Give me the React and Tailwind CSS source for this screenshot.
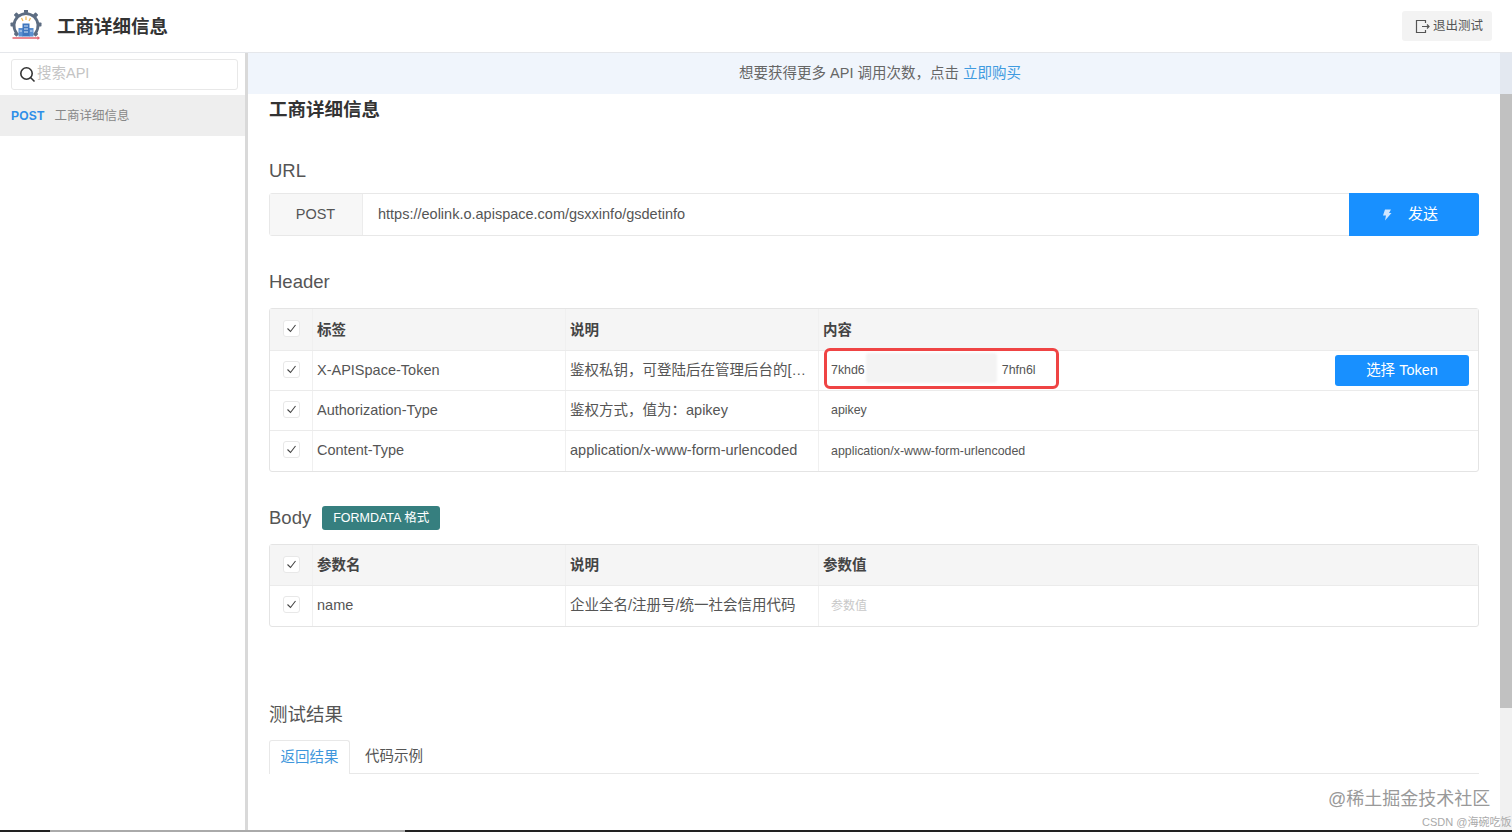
import React from "react";

const FONT = "[font-family:'Liberation_Sans','Noto_Sans_CJK_SC',sans-serif]";

function Logo() {
  const teeth = [-135, -90, -45, 0, 45, 90, 135];
  return (
    <svg width="32" height="32" viewBox="0 0 32 32" className="shrink-0">
      <g transform="translate(16 14.500)">
        <path d="M-9.500 8.500A12 12 0 1 1 9.500 8.500" fill="none" stroke="#5d6d82" strokeWidth="2.800" />
        {teeth.map((a) => (
          <rect key={a} x="-2" y="-15.500" width="4" height="4" rx="0.800" fill="#5d6d82" transform={`rotate(${a})`} />
        ))}
      </g>
      <path d="M16 6.500v3.500M11.500 8l1.500 3M20.500 8l-1.500 3" stroke="#f3bd5b" strokeWidth="1.300" />
      <rect x="8.500" y="18" width="4.500" height="8.500" fill="#5b8fd0" />
      <rect x="19" y="18" width="4.500" height="8.500" fill="#5b8fd0" />
      <rect x="12.500" y="13.500" width="7" height="13" fill="#3f76bd" />
      <path d="M14 16h4M14 19h4M14 22h4M9.500 21h2.500M20 21h2.500" stroke="#d6e5f7" strokeWidth="1" />
      <path d="M2.500 28h26" stroke="#e4606d" strokeWidth="1.500" />
      <path d="M27.500 26l2.500 2-2.500 2z" fill="#e4606d" />
    </svg>
  );
}

function Check() {
  return (
    <span className="flex h-[17px] w-[17px] items-center justify-center rounded-[3px] border border-[#e8e8e8] bg-white">
      <svg width="11" height="11" viewBox="0 0 11 11">
        <path d="M1.500 5.500l3 3 5-6.500" fill="none" stroke="#444" strokeWidth="1.100" />
      </svg>
    </span>
  );
}

function Row({ head, tall, last, a, b, children }) {
  return (
    <div
      className={`grid grid-cols-[43px_253px_253px_1fr] ${head ? "bg-[#f5f5f5]" : ""} ${tall ? "h-[42px]" : head ? "h-[41px]" : "h-[40px]"} ${last ? "" : "border-b border-[#ebebeb]"}`}
    >
      <div className={`flex items-start justify-center border-r border-[#f0f0f0] ${head ? "pt-[11px]" : "pt-[10px]"}`}>
        <Check />
      </div>
      <div className={`flex items-center border-r border-[#f0f0f0] pl-[4px] text-[14.500px] ${head ? "pt-[2px] font-bold text-[#444]" : "text-[#555]"}`}>{a}</div>
      <div className={`flex items-center border-r border-[#f0f0f0] pl-[4px] text-[14.500px] ${head ? "pt-[2px] font-bold text-[#444]" : "text-[#555]"}`}>{b}</div>
      <div className={`relative flex min-w-0 items-center ${head ? "pt-[2px]" : ""}`}>{children}</div>
    </div>
  );
}

export default function App() {
  return (
    <div className={`${FONT} h-[832px] w-[1512px] overflow-hidden bg-white text-[#444]`}>
      <div className="flex h-[830px] flex-col">
        <header className="flex h-[53px] shrink-0 items-center justify-between border-b border-[#e5e7eb] pl-[10px] pr-[20px]">
          <div className="flex items-center gap-[15px]">
            <Logo />
            <span className="pt-[1px] text-[18.500px] font-bold text-[#333]">工商详细信息</span>
          </div>
          <button className="flex h-[30px] w-[90px] items-center gap-[3px] rounded-[3px] bg-[#f3f3f3] pl-[13px] text-[12.500px] text-[#555]">
            <svg width="15" height="15" viewBox="0 0 15 15">
              <path d="M10.500 4V1.500h-9v12h9V11M7 7.500h7M12 5.500l2 2-2 2" fill="none" stroke="#555" strokeWidth="1.200" />
            </svg>
            退出测试
          </button>
        </header>

        <div className="flex min-h-0 flex-1">
          <aside className="w-[248px] shrink-0 border-r-[3px] border-[#d9d9d9]">
            <div className="flex h-[42px] items-center pl-[11px] pr-[7px]">
              <div className="flex h-[31px] w-[227px] items-center gap-[1px] rounded-[3px] border border-[#e8e8e8] bg-white pl-[7px] text-[14.500px] text-[#c4c4c4]">
                <svg width="17" height="17" viewBox="0 0 17 17" className="shrink-0">
                  <circle cx="7.500" cy="7.500" r="5.700" fill="none" stroke="#333" strokeWidth="1.600" />
                  <path d="M11.500 11.500l4 4" stroke="#333" strokeWidth="1.600" />
                </svg>
                搜索API
              </div>
            </div>
            <div className="flex h-[41px] items-center gap-[10px] bg-[#eeeeee] pl-[11px] pt-[1px]">
              <span className="text-[12px] font-bold tracking-[0.200px] text-[#2f8fe8]">POST</span>
              <span className="text-[12.500px] text-[#888]">工商详细信息</span>
            </div>
          </aside>

          <main className="flex min-w-0 flex-1 flex-col">
            <div className="flex h-[41px] shrink-0 items-center justify-center bg-[#f0f5fc] pl-[12px] text-[14.500px] text-[#666]">
              <span>想要获得更多 API 调用次数，点击 <span className="text-[#3f9be0]">立即购买</span></span>
            </div>
            <div className="px-[21px]">
              <h1 className="mt-[3px] h-[26px] text-[18.500px] font-bold leading-[26px] text-[#333]">工商详细信息</h1>

              <h2 className="mt-[35px] h-[26px] text-[18.500px] leading-[26px] text-[#555]">URL</h2>
              <div className="mt-[9px] flex h-[43px] rounded-[3px] border border-[#e8e8e8]">
                <div className="flex w-[93px] shrink-0 items-center justify-center border-r border-[#ececec] bg-[#f7f7f7] pr-[1px] text-[14.500px] text-[#555]">POST</div>
                <div className="flex flex-1 items-center pl-[15px] text-[14.500px] text-[#555]">https://eolink.o.apispace.com/gsxxinfo/gsdetinfo</div>
                <button className="my-[-1px] mr-[-1px] flex w-[130px] items-center justify-center gap-[16px] rounded-r-[3px] bg-[#1890ff] pr-[8px] text-[15px] text-white">
                  <svg width="10" height="12" viewBox="0 0 10 12">
                    <path d="M3 0.500h6L7 4h2.500L3 11.500l1-5H1z" fill="#cfe6ff" />
                  </svg>
                  发送
                </button>
              </div>

              <h2 className="mt-[33px] h-[26px] text-[18.500px] leading-[26px] text-[#555]">Header</h2>
              <div className="mt-[13px] rounded-[3px] border border-[#e4e4e4]">
                <Row head tall a="标签" b="说明">
                  <span className="pl-[4px] text-[14.500px] font-bold text-[#444]">内容</span>
                </Row>
                <Row a="X-APISpace-Token" b="鉴权私钥，可登陆后在管理后台的[…">
                  <span className="pl-[12px] text-[12.400px] text-[#555]">7khd6</span>
                  <span className="w-[137px] shrink-0" />
                  <span className="text-[12.400px] text-[#555]">7hfn6l</span>
                  <div className="absolute left-[47px] top-[2px] h-[30px] w-[131px] rounded-[3px] bg-[#f3f3f3] blur-[1px]" />
                  <div className="absolute left-[5px] top-[-3px] h-[41px] w-[235px] rounded-[6px] border-[3px] border-[#ef4444]" />
                  <button className="absolute right-[9px] top-[4px] h-[31px] w-[134px] rounded-[3px] bg-[#1890ff] text-[14.500px] text-white">选择 Token</button>
                </Row>
                <Row a="Authorization-Type" b="鉴权方式，值为：apikey">
                  <span className="pl-[12px] text-[12.400px] text-[#555]">apikey</span>
                </Row>
                <Row last a="Content-Type" b="application/x-www-form-urlencoded">
                  <span className="pl-[12px] text-[12.400px] text-[#555]">application/x-www-form-urlencoded</span>
                </Row>
              </div>

              <div className="mt-[33px] flex h-[26px] items-center gap-[11px]">
                <h2 className="text-[18.500px] text-[#555]">Body</h2>
                <span className="flex h-[24px] w-[118px] items-center justify-center rounded-[3px] bg-[#367f7f] text-[12.500px] text-white">FORMDATA 格式</span>
              </div>
              <div className="mt-[13px] rounded-[3px] border border-[#e4e4e4]">
                <Row head a="参数名" b="说明">
                  <span className="pl-[4px] text-[14.500px] font-bold text-[#444]">参数值</span>
                </Row>
                <Row last a="name" b="企业全名/注册号/统一社会信用代码">
                  <span className="pl-[12px] text-[12px] text-[#c8c8c8]">参数值</span>
                </Row>
              </div>

              <h2 className="mt-[75px] h-[26px] text-[18.500px] leading-[26px] text-[#555]">测试结果</h2>
              <div className="mt-[12px] flex h-[34px] border-b border-[#e8e8e8]">
                <div className="mb-[-1px] flex w-[81px] items-center justify-center rounded-t-[3px] border border-b-0 border-[#e8e8e8] bg-white text-[14.500px] text-[#3f97dc]">返回结果</div>
                <div className="flex w-[88px] items-center justify-center text-[14.500px] text-[#555]">代码示例</div>
              </div>
            </div>
          </main>

          <div className="flex w-[12px] shrink-0 flex-col bg-[#f1f1f1]">
            <div className="h-[41px] bg-[#e3e8f0]" />
            <div className="h-[614px] bg-[#c1c1c1]" />
          </div>
        </div>
      </div>
      <div className="flex h-[2px]">
        <div className="w-[50px] bg-[#222]" />
        <div className="w-[355px] bg-[#aaaaaa]" />
        <div className="flex-1 bg-[#222]" />
      </div>

      <div className="absolute left-[1328px] top-[786px] text-[18px] text-[#999]">@稀土掘金技术社区</div>
      <div className="absolute left-[1422px] top-[814px] text-[11px] text-[#aaa]">CSDN @海碗吃饭</div>
    </div>
  );
}
